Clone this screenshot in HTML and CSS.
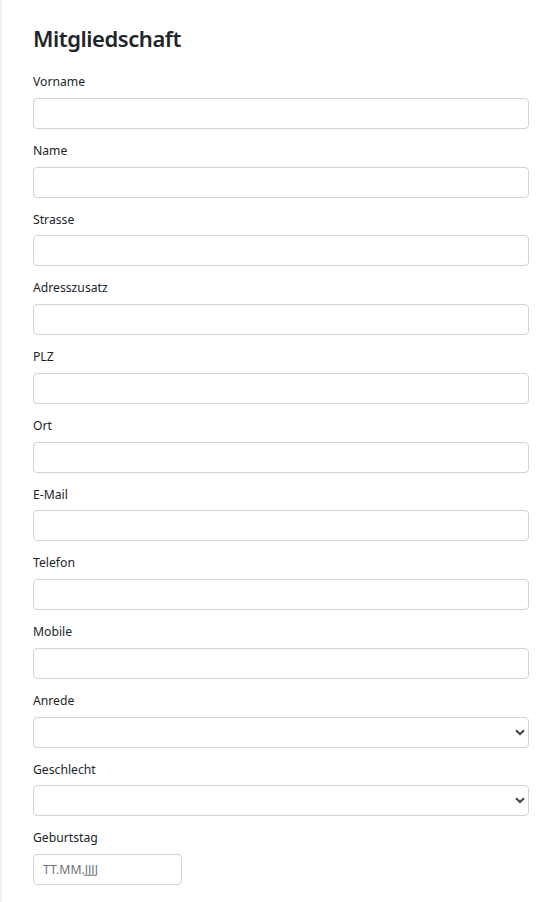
FILE: index.html
```html
<!DOCTYPE html>
<html lang="de">
<head>
<meta charset="utf-8">
<title>Mitgliedschaft</title>
<link rel="stylesheet" href="styles.css">
</head>
<body>
<main class="page">
  <h1 class="title">Mitgliedschaft</h1>
  <form class="form">
    <div class="group"><label class="label" for="f1">Vorname</label><input class="control" id="f1" type="text"></div>
    <div class="group"><label class="label" for="f2">Name</label><input class="control" id="f2" type="text"></div>
    <div class="group"><label class="label" for="f3">Strasse</label><input class="control" id="f3" type="text"></div>
    <div class="group"><label class="label" for="f4">Adresszusatz</label><input class="control" id="f4" type="text"></div>
    <div class="group"><label class="label" for="f5">PLZ</label><input class="control" id="f5" type="text"></div>
    <div class="group"><label class="label" for="f6">Ort</label><input class="control" id="f6" type="text"></div>
    <div class="group"><label class="label" for="f7">E-Mail</label><input class="control" id="f7" type="text"></div>
    <div class="group"><label class="label" for="f8">Telefon</label><input class="control" id="f8" type="text"></div>
    <div class="group"><label class="label" for="f9">Mobile</label><input class="control" id="f9" type="text"></div>
    <div class="group"><label class="label" for="f10">Anrede</label><select class="control select" id="f10"><option></option></select></div>
    <div class="group"><label class="label" for="f11">Geschlecht</label><select class="control select" id="f11"><option></option></select></div>
    <div class="group"><label class="label" for="f12">Geburtstag</label><input class="control date" id="f12" type="text" placeholder="TT.MM.JJJJ"></div>
  </form>
</main>
</body>
</html>
```

FILE: styles.css
```css
html, body {
  margin: 0;
  padding: 0;
  background: #ffffff;
}
body {
  font-family: "Noto Sans", "Open Sans", "DejaVu Sans", sans-serif;
  color: #212529;
  border-left: 2px solid #f1f1f1;
  min-height: 902px;
  box-sizing: border-box;
}
.page {
  padding: 24px 31px 0 31px;
}
.title {
  margin: 0 0 19px 0;
  font-size: 22px;
  line-height: 29px;
  font-weight: 600;
  color: #212529;
  letter-spacing: -0.45px;
}
.form {
  display: flex;
  flex-direction: column;
  gap: 12px;
}
.group {
  display: flex;
  flex-direction: column;
}
.label {
  font-size: 12.2px;
  line-height: 19.75px;
  margin-bottom: 6px;
  color: #212529;
}
.control {
  box-sizing: border-box;
  height: 31px;
  width: 100%;
  margin: 0;
  padding: 4px 9px;
  border: 1px solid #ced4da;
  border-radius: 4px;
  background: #ffffff;
  font-family: inherit;
  font-size: 12.2px;
  color: #495057;
  outline: none;
}
.select {
  appearance: none;
  -webkit-appearance: none;
  background-image: url("data:image/svg+xml,%3Csvg xmlns='http://www.w3.org/2000/svg' width='10' height='7' viewBox='0 0 10 7'%3E%3Cpath d='M1 1.2 L5 5 L9 1.2' fill='none' stroke='%23404448' stroke-width='2'/%3E%3C/svg%3E");
  background-repeat: no-repeat;
  background-position: right 3px center;
  background-size: 10px 7px;
}
.date {
  width: 149px;
}
.date::placeholder {
  color: #6c757d;
  opacity: 1;
}
```
